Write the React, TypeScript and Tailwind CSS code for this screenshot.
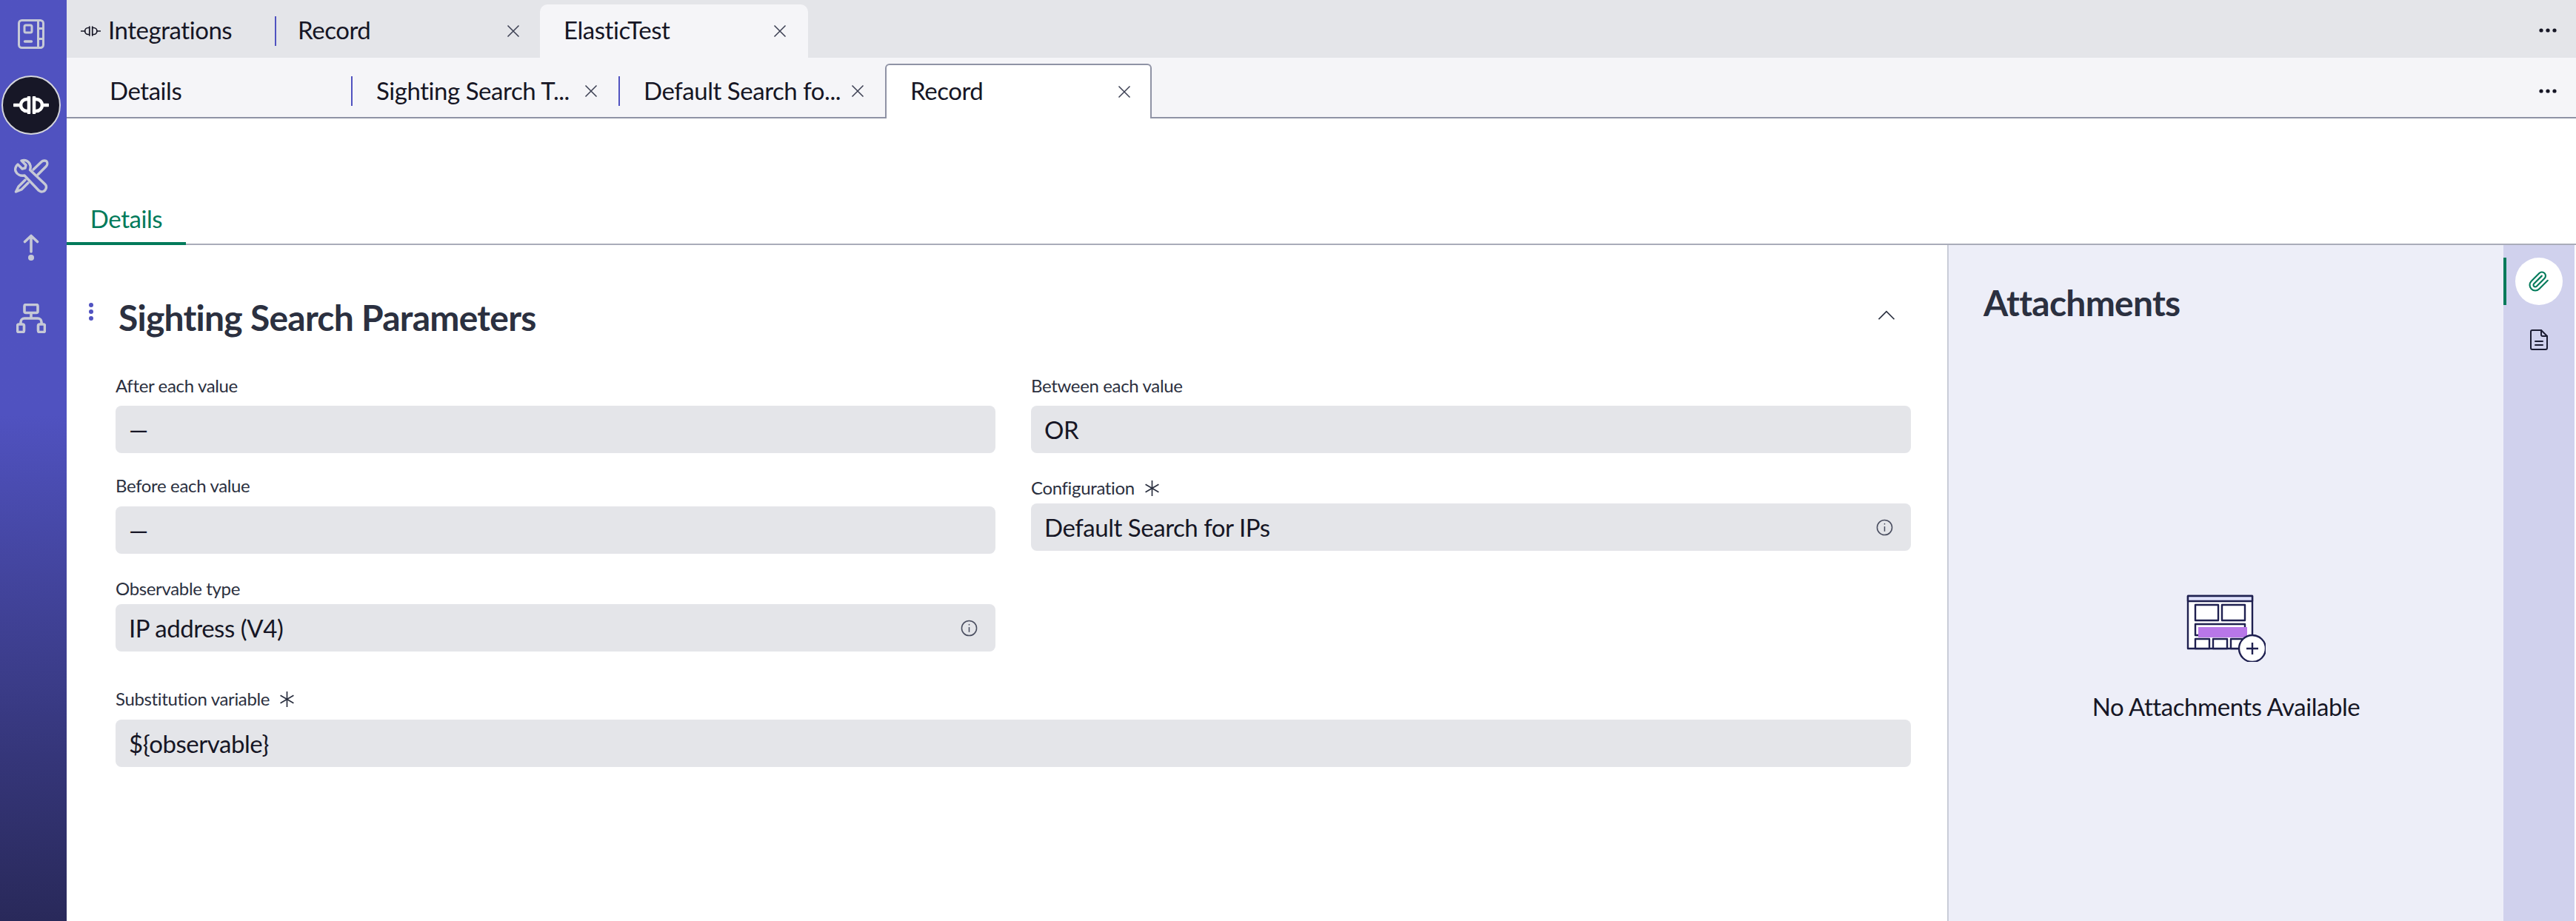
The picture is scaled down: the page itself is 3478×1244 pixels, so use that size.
import React from "react";

const font = { fontFamily: '"Lato", "Noto Sans", sans-serif' };

function CloseX() {
  return (
    <svg viewBox="0 0 18 18" className="h-[18px] w-[18px] shrink-0" fill="none" stroke="#3b3f52" strokeWidth="1.5">
      <path d="M1.5 1.5 16.5 16.5M16.5 1.5 1.5 16.5" />
    </svg>
  );
}

function Dots() {
  return (
    <svg viewBox="0 0 24 6" className="h-[6px] w-[24px]" fill="#161625">
      <circle cx="3" cy="3" r="2.6" />
      <circle cx="12" cy="3" r="2.6" />
      <circle cx="21" cy="3" r="2.6" />
    </svg>
  );
}

function PlugIcon({ className, color, sw }: { className: string; color: string; sw: number }) {
  return (
    <svg viewBox="0 0 48 24" className={className} fill="none" stroke={color} strokeWidth={sw} strokeLinecap="round">
      <path d="M1 12h9" />
      <path d="M20 4h-2a8 8 0 0 0 0 16h2" />
      <path d="M21 1.500v21" />
      <path d="M28 1.500v21" />
      <path d="M28 4h3a8 8 0 0 1 0 16h-3" />
      <path d="M39 12h8" />
    </svg>
  );
}

function Asterisk() {
  return (
    <svg viewBox="0 0 20 20" className="ml-[13px] inline-block h-[21px] w-[21px]" fill="none" stroke="#2b3040" strokeWidth="1.6">
      <path d="M10 0v20M1.5 5l17 10M18.5 5l-17 10" />
    </svg>
  );
}

function InfoIcon() {
  return (
    <svg viewBox="0 0 24 24" className="h-[23px] w-[23px]" fill="none" stroke="#4a4e60" strokeWidth="1.6">
      <circle cx="12" cy="12" r="10.5" />
      <path d="M12 10.5v7" />
      <circle cx="12" cy="7" r="0.9" fill="#4a4e60" stroke="none" />
    </svg>
  );
}

function Sep() {
  return <div className="h-10 w-[2px] shrink-0 bg-[#5052c0]" />;
}

function Field({
  label,
  value,
  required,
  info,
  labelClass,
}: {
  label: string;
  value: string;
  required?: boolean;
  info?: boolean;
  labelClass: string;
}) {
  return (
    <div>
      <div className={`flex h-6 items-center pb-[2px] text-[24px] tracking-[-0.35px] text-[#2b3040] ${labelClass}`}>
        <span>{label}</span>
        {required ? <Asterisk /> : null}
      </div>
      <div className="flex h-16 items-center justify-between rounded-[8px] bg-[#e4e5e9] pl-[18px] pr-[24px] text-[33px] tracking-[-0.45px] text-[#161625]">
        <span className="pt-[1px]">{value}</span>
        {info ? <InfoIcon /> : null}
      </div>
    </div>
  );
}

export default function App() {
  return (
    <div style={font} className="flex h-screen w-screen overflow-hidden bg-white">
      <aside className="flex w-[90px] shrink-0 flex-col items-center bg-linear-to-b from-[#5052c0] from-45% to-[#29295a] pr-[6px]">
        <svg viewBox="0 0 36 40" className="mt-[26px] h-10 w-9 shrink-0" fill="none" stroke="#c6c9d6" strokeWidth="3" strokeLinecap="round">
          <rect x="1.500" y="1.500" width="33" height="37" rx="4" />
          <path d="M27.500 1.500v37" />
          <path d="M28 12.500h6M28 26.500h6" strokeLinecap="butt" />
          <rect x="9" y="8" width="10" height="10" rx="2" />
          <path d="M9.500 30h9" strokeWidth="3.400" />
        </svg>
        <div className="mt-9 flex h-20 w-20 shrink-0 items-center justify-center rounded-full border-2 border-[#d4d5dc] bg-[#171727]">
          <PlugIcon className="h-[24px] w-[48px]" color="#ffffff" sw={4.5} />
        </div>
        <svg viewBox="0 0 44 44" className="mt-[34px] h-11 w-11 shrink-0 overflow-visible" fill="none" stroke="#c6c9d6" strokeWidth="3.400" strokeLinejoin="round" strokeLinecap="round">
          <path d="M4 6 10 12 14 11 15 7 9 1C14-1 20 2 21 8 21.500 10 21 12 20.500 13.500L41 33C44 36 42 43 36 43 34.500 43 33.500 42 32 41L13 21C8 22 3 20 1 15 0 12 1.500 8 4 6Z" />
          <path d="M25 13 36 2.500C38 .5 42 .5 43 2 44.500 4 44 7 42 9L31 20" />
          <path d="M14 27 5 36 1.500 43 9 40 18 31" />
        </svg>
        <svg viewBox="0 0 22 36" className="mt-[56px] h-9 w-[22px] shrink-0" fill="none" stroke="#c6c9d6" strokeWidth="3.600" strokeLinecap="round" strokeLinejoin="round">
          <path d="M11 24V2.500M2.500 10.500 11 2.500l8.500 8" />
          <circle cx="11" cy="32" r="4" fill="#c6c9d6" stroke="none" />
        </svg>
        <svg viewBox="0 0 40 40" className="mt-[58px] h-10 w-10 shrink-0" fill="none" stroke="#c6c9d6" strokeWidth="3.600" strokeLinejoin="round">
          <rect x="11" y="1.500" width="18" height="11" rx="2" />
          <path d="M20 13v7M6 27v-2a5 5 0 0 1 5-5h18a5 5 0 0 1 5 5v2" />
          <rect x="1.500" y="28" width="9" height="10.500" rx="2" />
          <rect x="29.500" y="28" width="9" height="10.500" rx="2" />
        </svg>
      </aside>

      <main className="flex min-w-0 flex-1 flex-col">
        <div className="flex h-[78px] shrink-0 items-end bg-[#e4e5e9] pr-[26px] text-[33px] tracking-[-0.45px] text-[#161625]">
          <div className="flex h-[78px] w-[281px] items-center pl-[19px] pt-[5px]">
            <PlugIcon className="mr-[10px] h-[14px] w-[27px]" color="#161625" sw={3} />
            <span className="pb-[2px]">Integrations</span>
          </div>
          <div className="flex h-[78px] w-[358px] items-center pr-[27px] pt-[5px]">
            <Sep />
            <span className="ml-[29px] flex-1 pb-[2px]">Record</span>
            <CloseX />
          </div>
          <div className="flex h-[72px] w-[362px] items-center rounded-t-[10px] bg-[#f5f5f8] pl-[32px] pr-[29px]">
            <span className="flex-1 pb-[2px]">ElasticTest</span>
            <CloseX />
          </div>
          <div className="ml-auto flex h-[78px] items-center pt-[4px]">
            <Dots />
          </div>
        </div>

        <div className="relative z-0 flex h-[82px] shrink-0 items-end border-b-2 border-[#8f93a5] bg-[#f5f5f8] pr-[26px] text-[33px] tracking-[-0.45px] text-[#161625]">
          <div className="flex h-[80px] w-[384px] items-center pl-[58px] pt-[9px]">
            <span>Details</span>
          </div>
          <div className="flex h-[80px] w-[361px] items-center pr-[28px] pt-[9px]">
            <Sep />
            <span className="ml-[32px] flex-1">Sighting Search T...</span>
            <CloseX />
          </div>
          <div className="flex h-[80px] w-[360px] items-center pr-[28px] pt-[9px]">
            <Sep />
            <span className="ml-[32px] flex-1">Default Search fo...</span>
            <CloseX />
          </div>
          <div className="relative top-[2px] flex h-[74px] w-[360px] items-center rounded-t-[6px] border-2 border-b-0 border-[#8f93a5] bg-white pl-[32px] pr-[26px]">
            <span className="flex-1 pb-[3px]">Record</span>
            <CloseX />
          </div>
          <div className="ml-auto flex h-[80px] items-center pt-[9px]">
            <Dots />
          </div>
        </div>

        <div className="flex h-[171px] shrink-0 items-end border-b-2 border-[#a9acb9] bg-white">
          <div className="relative top-[2px] flex h-[56px] w-[161px] items-start justify-center border-b-4 border-[#007a5a] text-[33px] leading-[40px] tracking-[-0.45px] text-[#007a5a]">
            Details
          </div>
        </div>

        <div className="flex min-h-0 flex-1">
          <section className="relative min-w-0 flex-1 bg-white pl-[66px] pr-[49px]">
            <div className="flex h-[179px] items-start">
              <div className="absolute left-[30px] top-[78px] flex flex-col gap-[3px]">
                <div className="h-[6px] w-[6px] rounded-full bg-[#5052c0]" />
                <div className="h-[6px] w-[6px] rounded-full bg-[#5052c0]" />
                <div className="h-[6px] w-[6px] rounded-full bg-[#5052c0]" />
              </div>
              <h2 className="ml-[4px] mt-[68px] flex-1 text-[48px] font-bold leading-[60px] tracking-[-0.75px] text-[#2b3040]">Sighting Search Parameters</h2>
              <svg viewBox="0 0 28 16" className="mr-[20px] mt-[88px] h-[14px] w-[26px]" fill="none" stroke="#2b3040" strokeWidth="2">
                <path d="M2 14 14 2l12 12" />
              </svg>
            </div>
            <div className="flex gap-12">
              <div className="w-[1188px] shrink-0">
                <Field label="After each value" value="—" labelClass="mb-[14px]" />
                <Field label="Before each value" value="—" labelClass="mt-[33px] mb-[15px]" />
                <Field label="Observable type" value="IP address (V4)" info labelClass="mt-[36px] mb-[8px]" />
              </div>
              <div className="w-[1188px] shrink-0">
                <Field label="Between each value" value="OR" labelClass="mb-[14px]" />
                <Field label="Configuration" value="Default Search for IPs" required info labelClass="mt-[36px] mb-[8px]" />
              </div>
            </div>
            <Field label="Substitution variable" value="${observable}" required labelClass="mt-[53px] mb-[15px]" />
          </section>

          <section className="flex w-[751px] shrink-0 flex-col items-center border-l-2 border-[#c9ccd8] bg-[#edeef8]">
            <h2 className="ml-[47px] mt-[48px] self-start text-[48px] font-bold leading-[60px] tracking-[-0.75px] text-[#2b3040]">Attachments</h2>
            <svg viewBox="0 0 110 92" className="ml-[-4px] mt-[363px] h-[92px] w-[110px] shrink-0" fill="none" stroke="#1f2050" strokeWidth="2.400" strokeLinejoin="round">
              <rect x="5" y="3" width="87" height="71" fill="#ffffff" />
              <rect x="5" y="3" width="87" height="7" fill="#dfe1fb" />
              <rect x="15" y="15" width="31" height="21" fill="#ffffff" />
              <rect x="51" y="15" width="31" height="21" fill="#ffffff" />
              <rect x="15" y="41" width="67" height="15" fill="#ffffff" />
              <rect x="19" y="45" width="66" height="14" fill="#b877e8" stroke="none" />
              <rect x="15" y="61" width="19" height="13" fill="#ffffff" />
              <rect x="39" y="61" width="19" height="13" fill="#ffffff" />
              <rect x="63" y="61" width="19" height="13" fill="#ffffff" />
              <circle cx="92" cy="74" r="18" fill="#ffffff" />
              <path d="M84 74h16M92 66v16" />
            </svg>
            <p className="mt-[38px] text-[33px] leading-[44px] tracking-[-0.45px] text-[#161625]">No Attachments Available</p>
          </section>

          <section className="flex w-[98px] shrink-0 flex-col items-center border-r-2 border-white bg-[#d0d1ed]">
            <div className="mt-[17px] flex h-16 w-full items-center border-l-4 border-[#007a5a] pl-[12px]">
              <div className="flex h-16 w-16 items-center justify-center rounded-full bg-white">
                <svg viewBox="0 0 24 24" className="h-[30px] w-[30px]" fill="none" stroke="#007a5a" strokeWidth="1.700" strokeLinecap="round" strokeLinejoin="round">
                  <path d="m21.440 11.050-9.190 9.190a6 6 0 0 1-8.490-8.490l8.570-8.570A4 4 0 1 1 18 8.840l-8.590 8.570a2 2 0 0 1-2.830-2.830l8.490-8.480" />
                </svg>
              </div>
            </div>
            <svg viewBox="0 0 24 28" className="mt-[33px] h-[28px] w-[24px] shrink-0" fill="none" stroke="#1c1d33" strokeWidth="2" strokeLinejoin="round" strokeLinecap="round">
              <path d="M3 1h12l8 8v16a2 2 0 0 1-2 2H3a2 2 0 0 1-2-2V3a2 2 0 0 1 2-2z" />
              <path d="M15 1v6a2 2 0 0 0 2 2h6M7 16h10M7 21h10" />
            </svg>
          </section>
        </div>
      </main>
    </div>
  );
}
